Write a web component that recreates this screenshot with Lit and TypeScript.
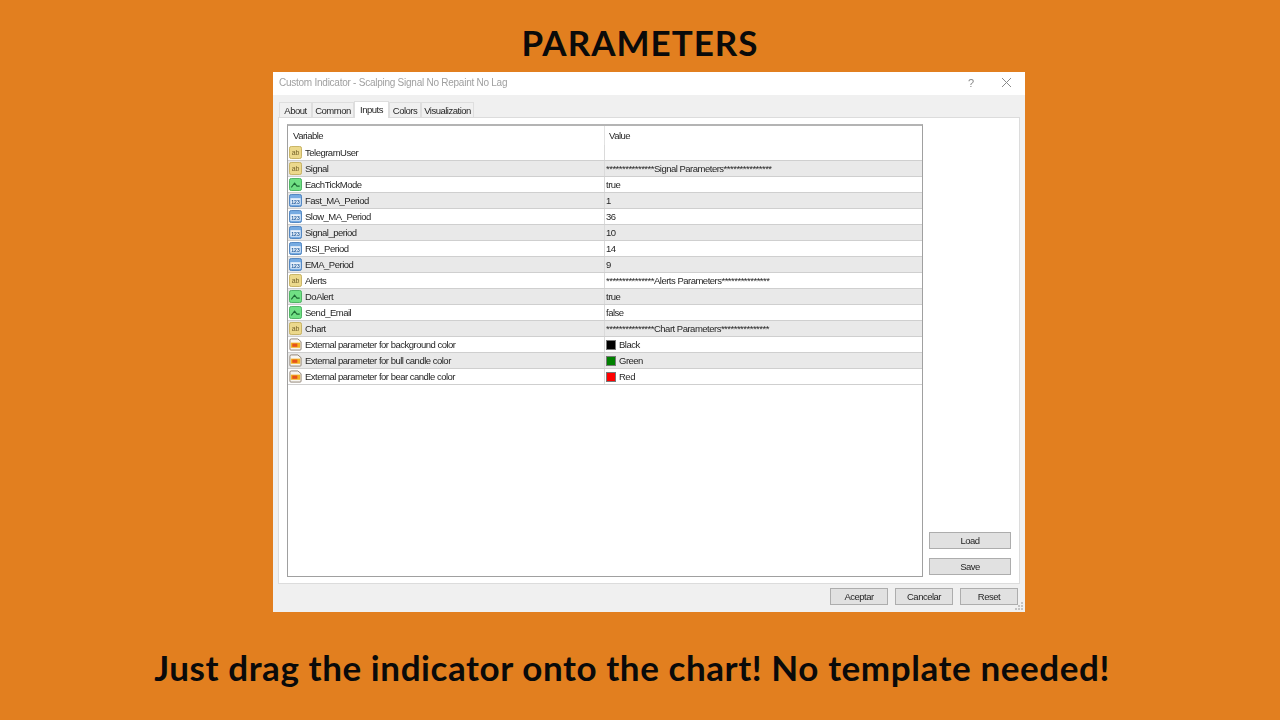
import { LitElement, html, css, svg } from "lit";
import { customElement } from "lit/decorators.js";

type Kind = "ab" | "bool" | "num" | "color";
interface Row { icon: Kind; name: string; value: string; swatch?: string }

const rows: Row[] = [
  { icon: "ab", name: "TelegramUser", value: "" },
  { icon: "ab", name: "Signal", value: "***************Signal Parameters***************" },
  { icon: "bool", name: "EachTickMode", value: "true" },
  { icon: "num", name: "Fast_MA_Period", value: "1" },
  { icon: "num", name: "Slow_MA_Period", value: "36" },
  { icon: "num", name: "Signal_period", value: "10" },
  { icon: "num", name: "RSI_Period", value: "14" },
  { icon: "num", name: "EMA_Period", value: "9" },
  { icon: "ab", name: "Alerts", value: "***************Alerts Parameters***************" },
  { icon: "bool", name: "DoAlert", value: "true" },
  { icon: "bool", name: "Send_Email", value: "false" },
  { icon: "ab", name: "Chart", value: "***************Chart Parameters***************" },
  { icon: "color", name: "External parameter for background color", value: "Black", swatch: "#000000" },
  { icon: "color", name: "External parameter for bull candle color", value: "Green", swatch: "#008000" },
  { icon: "color", name: "External parameter for bear candle color", value: "Red", swatch: "#ff0000" },
];

const tabs: [string, number][] = [["About", 33], ["Common", 42], ["Inputs", 35], ["Colors", 32], ["Visualization", 53]];

function icon(kind: Kind) {
  if (kind === "ab") {
    return svg`<svg class="ic" viewBox="0 0 14 14"><rect x=".5" y=".5" width="13" height="13" rx="2" fill="#ecd98c" stroke="#c4ae5c"/><text x="7" y="10" text-anchor="middle" class="ict" fill="#75622a">ab</text></svg>`;
  }
  if (kind === "bool") {
    return svg`<svg class="ic" viewBox="0 0 14 14"><rect x=".5" y=".5" width="13" height="13" rx="2" fill="#70e084" stroke="#45ad5b"/><path d="M2.500 10 6 5.500l2.500 3.200H11.500" fill="none" stroke="#1d6a33" stroke-width="1.200"/></svg>`;
  }
  if (kind === "num") {
    return svg`<svg class="ic" viewBox="0 0 14 14"><rect x=".5" y=".5" width="13" height="13" rx="2" fill="#76abe2" stroke="#4a80bd"/><rect x="1.500" y="4.500" width="11" height="7" fill="#e8f1fb"/><text x="7" y="10.300" text-anchor="middle" class="icn" fill="#1f5a9c">123</text></svg>`;
  }
  return svg`<svg class="ic" viewBox="0 0 14 14"><path d="M1 2.500q0-1.500 1.500-1.500h7l3.500 3v8q0 1-1 1H2q-1 0-1-1z" fill="#f8f6f2" stroke="#8d7f70"/><rect x="2" y="5" width="10" height="5.500" fill="#f3b422"/><rect x="3.500" y="6" width="5.500" height="3.500" fill="#e6521c"/></svg>`;
}

@customElement("app-root")
export class AppRoot extends LitElement {
  static styles = css`
    :host {
      display: flex;
      flex-direction: column;
      align-items: center;
      width: 1280px;
      height: 720px;
      overflow: hidden;
      background: #e27f1f;
      color: #000;
    }
    .title {
      margin: 0;
      height: 72px;
      padding-top: 21px;
      box-sizing: border-box;
      font: 700 35px/42px "Lato", sans-serif;
      letter-spacing: 1px;
      color: #0a0a0a;
    }
    .caption {
      margin: 0;
      padding: 33px 16px 0 0;
      font: 700 35px/44px "Lato", sans-serif;
      letter-spacing: 0.58px;
      color: #0a0a0a;
    }
    .dialog {
      position: relative;
      width: 752px;
      height: 540px;
      margin-left: 18px;
      display: flex;
      flex-direction: column;
      background: #f0f0f0;
      font: 9.500px/16px "Liberation Sans", sans-serif;
      letter-spacing: -0.5px;
      color: #262626;
      filter: blur(0.45px);
    }
    .titlebar {
      height: 23px;
      flex: none;
      box-sizing: border-box;
      background: #fff;
      display: flex;
      align-items: center;
      padding: 0 13px 2px 6px;
      color: #a0a0a0;
      font-size: 10px;
      letter-spacing: -0.25px;
    }
    .titlebar .t { flex: 1; }
    .help { width: 33px; font-size: 11px; color: #888; }
    .close { width: 11px; height: 11px; display: block; }
    .tabs {
      display: flex;
      align-items: flex-end;
      height: 22px;
      flex: none;
      padding: 0 6px;
    }
    .tab {
      height: 15px;
      border: 1px solid #dedede;
      border-bottom: none;
      box-sizing: border-box;
      background: #f0f0f0;
      line-height: 16px;
      text-align: center;
      white-space: nowrap;
    }
    .tab.on {
      height: 17px;
      margin-bottom: -1px;
      background: #fff;
      position: relative;
      line-height: 15px;
      z-index: 1;
    }
    .panel {
      height: 467px;
      flex: none;
      margin: 0 5px;
      box-sizing: border-box;
      background: #fff;
      border: 1px solid #dcdcdc;
      display: flex;
      padding: 6px 8px;
    }
    .list {
      width: 636px;
      height: 453px;
      box-sizing: border-box;
      border: 1px solid #a0a0a0;
      border-top: 2px solid #b4b4b4;
      flex: none;
      overflow: hidden;
    }
    .head, .row {
      display: grid;
      grid-template-columns: 316px 1fr;
    }
    .head {
      height: 19px;
      line-height: 19px;
    }
    .head .a { padding-left: 5px; }
    .head .b { padding-left: 4px; border-left: 1px solid #e2e2e2; }
    .row {
      height: 16px;
      box-sizing: border-box;
      border-bottom: 1px solid #cfcfcf;
      line-height: 16px;
    }
    .row.alt { background: #e9e9e9; }
    .cell-n {
      display: flex;
      align-items: center;
      gap: 3px;
      padding-left: 1px;
      white-space: nowrap;
      overflow: hidden;
    }
    .cell-v {
      display: flex;
      align-items: center;
      gap: 2px;
      padding-left: 1px;
      border-left: 1px solid #dadada;
      white-space: nowrap;
      overflow: hidden;
    }
    .ic { width: 13px; height: 13px; flex: none; display: block; }
    .ict { font: 400 7.500px "Liberation Sans", sans-serif; letter-spacing: 0; }
    .icn { font: 700 5.500px "Liberation Sans", sans-serif; letter-spacing: 0; }
    .sw {
      width: 8px;
      height: 8px;
      border: 1px solid #777;
      flex: none;
      margin-right: 1px;
    }
    .side {
      flex: 1;
      display: flex;
      flex-direction: column;
      justify-content: flex-end;
      align-items: flex-end;
      gap: 9px;
      padding: 0 0 2px 0;
    }
    .btn {
      box-sizing: border-box;
      height: 17px;
      background: #e1e1e1;
      border: 1px solid #adadad;
      text-align: center;
      line-height: 16px;
    }
    .side .btn { width: 82px; }
    .foot {
      flex: 1;
      display: flex;
      justify-content: flex-end;
      align-items: flex-start;
      gap: 7px;
      padding: 4px 7px 0 0;
    }
    .foot .btn { width: 58px; }
    .grip {
      position: absolute;
      right: 1px;
      bottom: 1px;
      width: 9px;
      height: 9px;
      display: block;
    }
  `;

  render() {
    return html`
      <h1 class="title">PARAMETERS</h1>
      <div class="dialog">
        <div class="titlebar">
          <span class="t">Custom Indicator - Scalping Signal No Repaint No Lag</span>
          <span class="help">?</span>
          <svg class="close" viewBox="0 0 11 11"><path d="M1 1l9 9M10 1l-9 9" stroke="#8a8a8a" fill="none"/></svg>
        </div>
        <div class="tabs">
          ${tabs.map(
            ([t, w]) => html`<div class="tab ${t === "Inputs" ? "on" : ""}" style="width:${w}px">${t}</div>`
          )}
        </div>
        <div class="panel">
          <div class="list">
            <div class="head"><div class="a">Variable</div><div class="b">Value</div></div>
            ${rows.map(
              (r, i) => html`<div class="row ${i % 2 === 1 ? "alt" : ""}">
                <div class="cell-n">${icon(r.icon)}<span>${r.name}</span></div>
                <div class="cell-v">
                  ${r.swatch ? html`<span class="sw" style="background:${r.swatch}"></span>` : ""}
                  <span>${r.value}</span>
                </div>
              </div>`
            )}
          </div>
          <div class="side">
            <div class="btn">Load</div>
            <div class="btn">Save</div>
          </div>
        </div>
        <div class="foot">
          <div class="btn">Aceptar</div>
          <div class="btn">Cancelar</div>
          <div class="btn">Reset</div>
        </div>
        <svg class="grip" viewBox="0 0 9 9"><path d="M6 0h2v2H6zM3 3h2v2H3zM6 3h2v2H6zM0 6h2v2H0zM3 6h2v2H3zM6 6h2v2H6z" fill="#c4c4c4"/></svg>
      </div>
      <p class="caption">Just drag the indicator onto the chart! No template needed!</p>
    `;
  }
}
